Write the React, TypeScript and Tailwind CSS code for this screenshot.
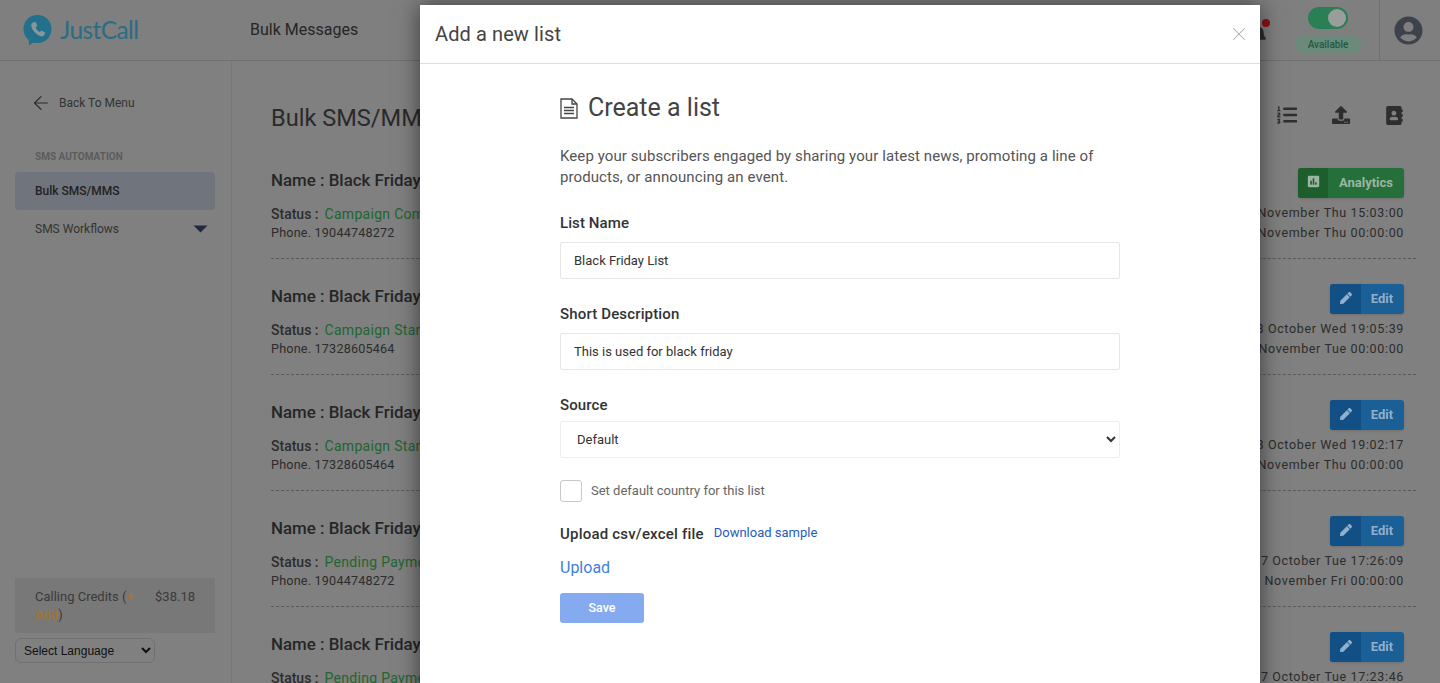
import React from "react";
import { FaBell, FaListOl, FaUpload, FaAddressBook, FaPoll, FaPen, FaUserCircle } from "react-icons/fa";
import { ArrowLeft, X } from "lucide-react";

const rows = [
  { status: "Campaign Completed", phone: "19044748272", a: "12 November Thu 15:03:00", b: "26 November Thu 00:00:00", analytics: true },
  { status: "Campaign Started", phone: "17328605464", a: "28 October Wed 19:05:39", b: "24 November Tue 00:00:00" },
  { status: "Campaign Started", phone: "17328605464", a: "28 October Wed 19:02:17", b: "26 November Thu 00:00:00" },
  { status: "Pending Payment", phone: "19044748272", a: "27 October Tue 17:26:09", b: "27 November Fri 00:00:00" },
  { status: "Pending Payment", phone: "19044748272", a: "27 October Tue 17:23:46", b: "27 November Fri 00:00:00" },
];

function Logo() {
  return (
    <div className="flex items-center gap-[8px]">
      <svg width="29" height="32" viewBox="0 0 29 32">
        <path d="M14.5 1C22.5 1 28.5 7 28.5 15S22.5 29 14.5 29C13 29 11.5 28.8 10.3 28.4L6 31.5L5.8 26.3C2.6 23.7 0.5 19.7 0.5 15C0.5 7 6.5 1 14.5 1Z" fill="#23708c" />
        <path d="M10 8.5L12.5 7.8L14.3 11.8L12.6 13.3C13.3 15.5 14.8 17.1 16.9 18.1L18.5 16.5L22.2 18.5L21.3 21C20.8 22.2 19.6 22.6 18.4 22.3C13.5 21 9.5 17 8.3 12.2C8 10.6 8.7 9.2 10 8.5Z" fill="#8a959a" />
      </svg>
      <span className="text-[24.5px] leading-none tracking-[-0.6px] text-[#2a6d84] font-['Lato',sans-serif]">JustCall</span>
    </div>
  );
}

function Row({ r }: { r: (typeof rows)[number] }) {
  return (
    <div className="h-[116px] pt-[25px] pr-[12px] flex justify-between border-b border-dashed border-[#5a5a5a]">
      <div className="pt-[1px] whitespace-nowrap">
        <div className="text-[16.9px] leading-[22px] font-medium text-[#262626]">Name : Black Friday Campaign</div>
        <div className="mt-[13px] text-[14px] leading-[20px] text-[#2c2c2c]">
          <span className="font-medium">Status :</span>
          <span className="ml-[6px] text-[#23652f] tracking-[0.3px]">{r.status}</span>
        </div>
        <div className="text-[12.6px] leading-[18px] tracking-[0.2px] text-[#2c2c2c]">Phone. {r.phone}</div>
      </div>
      <div className="flex flex-col items-end">
        {r.analytics ? (
          <div className="flex h-[30px] w-[106px] rounded-[3px] overflow-hidden bg-[#25703a] text-[#9cb5a3] shadow-sm">
            <div className="w-[30px] bg-[#1c5f2c] flex items-center justify-center pb-[3px]">
              <FaPoll size={13} />
            </div>
            <div className="flex-1 flex items-center justify-center text-[13px] font-bold">Analytics</div>
          </div>
        ) : (
          <div className="flex h-[30px] w-[74px] rounded-[3px] overflow-hidden bg-[#1a5f96] text-[#8fb0cc] shadow-sm">
            <div className="w-[31px] bg-[#124f85] flex items-center justify-center pb-[3px]">
              <FaPen size={12} />
            </div>
            <div className="flex-1 flex items-center justify-center text-[13px] font-bold pr-[1px]">Edit</div>
          </div>
        )}
        <div className="mt-[5px] text-[12.5px] leading-[20px] tracking-[0.65px] text-[#2c2c2c] text-right whitespace-nowrap">{r.a}</div>
        <div className="text-[12.5px] leading-[20px] tracking-[0.65px] text-[#2c2c2c] text-right whitespace-nowrap">{r.b}</div>
      </div>
    </div>
  );
}

export default function App() {
  return (
    <div className="relative h-[683px] w-[1440px] overflow-hidden bg-[#808080] font-['Roboto',sans-serif]">
      <header className="h-[61px] flex items-center border-b border-[#707070] bg-[#7f7f7f]">
        <div className="w-[250px] pl-[23px]"><Logo /></div>
        <div className="text-[16px] text-[#262626]">Bulk Messages</div>
        <div className="ml-auto flex items-center h-full">
          <div className="relative mr-[28px] mt-[8px] text-[#2e2e2e]">
            <FaBell size={18} />
            <span className="absolute -top-[6px] left-[13px] w-[8px] h-[8px] rounded-full bg-[#8f0f15]" />
          </div>
          <div className="w-[66px] flex flex-col items-center gap-[6px] pt-[1px]">
            <div className="w-[40px] h-[22px] rounded-full bg-[#2a7f55] flex items-center justify-end pr-[2px]">
              <div className="w-[18px] h-[18px] rounded-full bg-[#9a9e9b]" />
            </div>
            <div className="w-[66px] h-[19px] rounded-full bg-[#6c8a7c] text-[#1d5c3d] text-[10px] font-medium flex items-center justify-center">Available</div>
          </div>
          <div className="ml-[18px] h-full w-[61px] border-l border-[#707070] flex items-center justify-center pr-[3px] text-[#3e424a]">
            <FaUserCircle size={29} />
          </div>
        </div>
      </header>
      <div className="flex h-[622px]">
        <aside className="w-[232px] shrink-0 border-r border-[#777777] flex flex-col px-[15px]">
          <div className="mt-[34px] pl-[20px] flex items-center gap-[7px] text-[12px] text-[#333333] h-[16px]">
            <ArrowLeft size={22} strokeWidth={1.3} className="-ml-[5px] text-[#2a2a2a]" />
            <span>Back To Menu</span>
          </div>
          <div className="mt-[39px] pl-[20px] text-[10px] leading-[14px] font-bold text-[#5c5c5c]">SMS AUTOMATION</div>
          <div className="mt-[8px] h-[38px] w-[200px] rounded-[4px] bg-[#70757d] pl-[20px] flex items-center text-[12px] font-medium text-[#222222]">Bulk SMS/MMS</div>
          <div className="h-[38px] w-[200px] pl-[20px] pr-[7px] flex items-center justify-between text-[12px] text-[#333333]">
            <span>SMS Workflows</span>
            <svg width="15" height="8" viewBox="0 0 15 8"><path d="M0.5 0.5H14.5L7.5 7.5Z" fill="#1f2a3d" /></svg>
          </div>
          <div className="mt-auto w-[200px] h-[55px] bg-[#787878] pl-[20px] pr-[20px] pt-[10px] flex justify-between text-[13px] leading-[18px] text-[#3a3a3a]">
            <div className="w-[106px]">Calling Credits (<span className="text-[#a5752c]">+ Add</span>)</div>
            <div>$38.18</div>
          </div>
          <select defaultValue="l" className="mt-[5px] mb-[20px] w-[140px] h-[25px] rounded-[6px] border border-[#707070] bg-[#808080] text-[12px] text-[#111111] font-['Liberation_Sans',sans-serif] pl-[4px]">
            <option value="l">Select Language</option>
          </select>
        </aside>
        <main className="flex-1 pl-[39px] pr-[24px] overflow-hidden">
          <div className="h-[82px] flex items-start justify-between pt-[42px] pr-[12px]">
            <h1 className="text-[23.6px] leading-[30px] text-[#2a2a2a]">Bulk SMS/MMS Campaign</h1>
            <div className="flex items-center gap-[35px] pt-[2px] text-[#2e2e2e]">
              <FaListOl size={20} />
              <FaUpload size={18} />
              <FaAddressBook size={19} />
            </div>
          </div>
          {rows.map((r, i) => <Row key={i} r={r} />)}
        </main>
      </div>

      <div className="absolute left-[420px] top-[5px] w-[840px] h-[700px] bg-white shadow-[0_0_22px_rgba(0,0,0,0.55)]">
        <div className="h-[59px] border-b border-[#dedede] flex items-center justify-between pl-[15px] pr-[10px]">
          <div className="text-[20px] text-[#444444] tracking-[0.1px]">Add a new list</div>
          <X size={22} strokeWidth={1.1} className="text-[#adadad]" />
        </div>
        <div className="w-[560px] ml-[140px] pt-[29px]">
          <div className="flex items-center gap-[10px] h-[30px]">
            <svg width="18" height="21" viewBox="0 0 18 21" fill="none" stroke="#444444" strokeWidth="1.3">
              <path d="M1 1H12L17 6V20H1Z" />
              <path d="M12 1V6H17" />
              <path d="M4 9.5H14M4 12.5H14M4 15.5H14" />
            </svg>
            <h2 className="text-[25px] leading-[30px] text-[#444444]">Create a list</h2>
          </div>
          <p className="mt-[23px] w-[540px] text-[15px] leading-[21px] tracking-[0.09px] text-[#555555]">Keep your subscribers engaged by sharing your latest news, promoting a line of products, or announcing an event.</p>
          <div className="mt-[25px] text-[15px] leading-[20px] tracking-[0.1px] font-medium text-[#333333]">List Name</div>
          <input readOnly value="Black Friday List" className="mt-[9px] block w-full h-[37px] border border-[#e6e6e6] rounded-[2px] pl-[13px] text-[13px] text-[#333333] outline-none" />
          <div className="mt-[25px] text-[15px] leading-[20px] tracking-[0.15px] font-medium text-[#333333]">Short Description</div>
          <input readOnly value="This is used for black friday" className="mt-[9px] block w-full h-[37px] border border-[#e6e6e6] rounded-[2px] pl-[13px] text-[13px] text-[#333333] outline-none" />
          <div className="mt-[25px] text-[15px] leading-[20px] tracking-[0.1px] font-medium text-[#333333]">Source</div>
          <select defaultValue="d" className="mt-[6px] block w-full h-[37px] border border-[#eeeeee] rounded-[2px] pl-[12px] bg-white text-[13px] text-[#333333] outline-none">
            <option value="d">Default</option>
          </select>
          <div className="mt-[22px] flex items-center gap-[9px] h-[22px]">
            <div className="w-[22px] h-[22px] rounded-[3px] border border-[#c8c8c8] bg-white" />
            <span className="text-[13px] text-[#666666]">Set default country for this list</span>
          </div>
          <div className="mt-[22px] flex items-center gap-[10px] h-[20px]">
            <span className="text-[15px] tracking-[0.2px] font-medium text-[#333333]">Upload csv/excel file</span>
            <span className="text-[13px] text-[#1d5cc0] -mt-[2px]">Download sample</span>
          </div>
          <div className="mt-[12px] text-[16px] leading-[24px] text-[#3f7fdc]">Upload</div>
          <div className="mt-[13px] w-[84px] h-[30px] rounded-[3px] bg-[#85aaf0] text-white text-[12.5px] font-medium flex items-center justify-center">Save</div>
        </div>
      </div>
    </div>
  );
}
